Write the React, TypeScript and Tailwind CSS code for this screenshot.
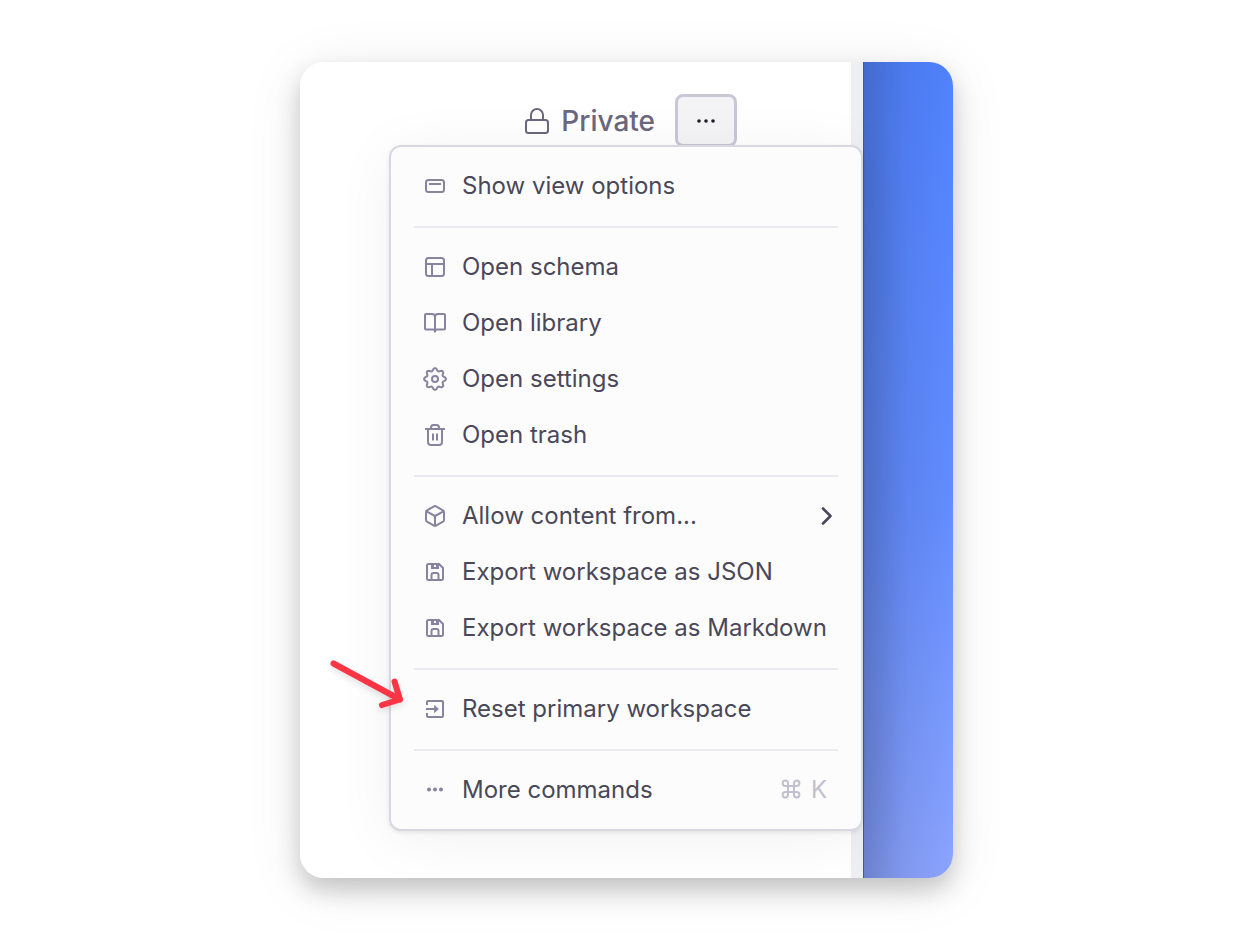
import React from 'react';

// Wavy ring with eight teeth, drawn round the centre of a 24px box
const gearPoints = Array.from({ length: 96 }, (_, i) => {
  const a = (i / 96) * Math.PI * 2;
  const wave = Math.cos(8 * a);
  const r = 9.6 + 1.3 * Math.sign(wave) * Math.pow(Math.abs(wave), 0.8);
  return `${(12 + r * Math.sin(a)).toFixed(2)},${(12 - r * Math.cos(a)).toFixed(2)}`;
}).join(' ');

const icons = {
  view: (
    <>
      <rect x="3" y="6" width="18" height="12" rx="2.5" />
      <path d="M6 10h12" />
    </>
  ),
  schema: (
    <>
      <rect x="3" y="3" width="18" height="18" rx="2.5" />
      <path d="M3 9h18M9 9v12" />
    </>
  ),
  library: <path d="M12 21.5V6a3 3 0 0 0-3-3H3a1 1 0 0 0-1 1v13.5a1 1 0 0 0 1 1h7a2 2 0 0 1 2 2 2 2 0 0 1 2-2h7a1 1 0 0 0 1-1V4a1 1 0 0 0-1-1h-6a3 3 0 0 0-3 3" />,
  settings: (
    <>
      <polygon points={gearPoints} />
      <circle cx="12" cy="12" r="3" />
    </>
  ),
  trash: (
    <>
      <path d="M2 6h20M8 6V4.5A2.5 2.5 0 0 1 10.5 2h3A2.5 2.5 0 0 1 16 4.5V6" />
      <path d="M5 6v13a3 3 0 0 0 3 3h8a3 3 0 0 0 3-3V6" />
      <path d="M10 10.5v7M14 10.500v7" />
    </>
  ),
  box: (
    <>
      <path d="M11 2.400a2 2 0 0 1 2 0l7 4a2 2 0 0 1 1 1.700v7.800a2 2 0 0 1-1 1.700l-7 4a2 2 0 0 1-2 0l-7-4a2 2 0 0 1-1-1.700V8.100a2 2 0 0 1 1-1.700z" />
      <path d="M3.500 7.300 12 12l8.500-4.700M12 12v10" />
    </>
  ),
  save: (
    <>
      <path d="M5.500 4H16l4 4v10.500a1.500 1.500 0 0 1-1.500 1.500h-13A1.500 1.500 0 0 1 4 18.500v-13A1.500 1.500 0 0 1 5.500 4z" />
      <path d="M8.500 20v-5a2 2 0 0 1 2-2h3a2 2 0 0 1 2 2v5" />
      <path d="M8 4h8v5H8zM11 5v2h2V5z" fill="currentColor" fillRule="evenodd" stroke="none" />
    </>
  ),
  reset: (
    <>
      <path d="M4 8V5a1 1 0 0 1 1-1h14a1 1 0 0 1 1 1v14a1 1 0 0 1-1 1H5a1 1 0 0 1-1-1v-3" />
      <path d="M3 12h9" />
      <path d="M11.500 8.500v7L15.500 12z" fill="currentColor" strokeWidth="0.8" />
    </>
  ),
  more: (
    <g fill="currentColor" stroke="none">
      <circle cx="6" cy="11.5" r="2" />
      <circle cx="12" cy="11.5" r="2" />
      <circle cx="18" cy="11.5" r="2" />
    </g>
  ),
};

type IconName = keyof typeof icons;

interface MenuEntry {
  icon: IconName;
  label: string;
  submenu?: boolean;
  shortcut?: boolean;
  highlighted?: boolean;
}

const groups: MenuEntry[][] = [
  [{ icon: 'view', label: 'Show view options' }],
  [
    { icon: 'schema', label: 'Open schema' },
    { icon: 'library', label: 'Open library' },
    { icon: 'settings', label: 'Open settings' },
    { icon: 'trash', label: 'Open trash' },
  ],
  [
    { icon: 'box', label: 'Allow content from...', submenu: true },
    { icon: 'save', label: 'Export workspace as JSON' },
    { icon: 'save', label: 'Export workspace as Markdown' },
  ],
  [{ icon: 'reset', label: 'Reset primary workspace', highlighted: true }],
  [{ icon: 'more', label: 'More commands', shortcut: true }],
];

function MenuIcon({ name }: { name: IconName }) {
  return (
    <svg
      className="h-6 w-6 shrink-0 text-[#8884a0]"
      viewBox="0 0 24 24"
      fill="none"
      stroke="currentColor"
      strokeWidth="2"
      strokeLinejoin="round"
      aria-hidden="true"
    >
      {icons[name]}
    </svg>
  );
}

function PointerArrow() {
  return (
    <svg
      className="pointer-events-none absolute -left-[86px] -top-[25px] h-14 w-20 drop-shadow-md"
      viewBox="0 0 80 56"
      fill="none"
      stroke="#fb3543"
      strokeWidth="6"
      strokeLinecap="round"
      strokeLinejoin="round"
      aria-hidden="true"
    >
      <path d="M5.500 7.500 72 43.500M66.500 25.500 72 43.500 54 49" />
    </svg>
  );
}

function MenuItem({ entry }: { entry: MenuEntry }) {
  return (
    <li className="relative">
      <button type="button" role="menuitem" className="flex h-14 w-full items-center gap-[15px] whitespace-nowrap pl-[9px] pr-[5px] text-left">
        <MenuIcon name={entry.icon} />
        <span className="flex-1">{entry.label}</span>
        {entry.submenu && (
          <svg className="h-6 w-3 shrink-0" viewBox="0 0 12 24" fill="none" stroke="currentColor" strokeWidth="2.6" strokeLinecap="round" strokeLinejoin="round" aria-hidden="true">
            <path d="m2 4.500 7.500 7.500L2 19.500" />
          </svg>
        )}
        {entry.shortcut && (
          <span className="flex items-center gap-2 pr-1.5 text-[#c2c0ce]">
            <svg className="h-6 w-6" viewBox="0 1 24 24" fill="none" stroke="currentColor" strokeWidth="2" aria-hidden="true">
              <path d="M9 9v6h6V9zM9 9H6.300A2.700 2.700 0 1 1 9 6.300zM15 9V6.300A2.700 2.700 0 1 1 17.700 9zM15 15h2.700A2.700 2.700 0 1 1 15 17.700zM9 15v2.700A2.700 2.700 0 1 1 6.300 15z" />
            </svg>
            K
          </span>
        )}
      </button>
      {entry.highlighted && <PointerArrow />}
    </li>
  );
}

export default function App() {
  return (
    <main className="flex min-h-screen items-center justify-center bg-white font-['Inter',sans-serif]">
      <div className="flex w-full max-w-[653px] overflow-hidden rounded-3xl bg-white shadow-[0_12px_24px_rgba(0,0,0,0.2),0_8px_60px_rgba(0,0,0,0.08)]">
        <section className="relative flex flex-1 flex-col items-end bg-white pb-[47px] pt-8">
          <div className="absolute inset-y-0 right-0 w-3 bg-[#efeff2]" />

          <header className="flex items-center gap-5 pr-[126px]">
            <div className="flex items-center gap-3 text-[28px] font-medium leading-8 text-[#6b677f]">
              <svg className="h-[26px] w-6" viewBox="0 0 24 26" fill="none" stroke="currentColor" strokeWidth="2" strokeLinejoin="round" aria-hidden="true">
                <rect x="1" y="12" width="22" height="13" rx="2.5" />
                <path d="M6 12V7a6 6 0 0 1 12 0v5" />
              </svg>
              Private
            </div>
            <button
              type="button"
              aria-label="More actions"
              aria-haspopup="menu"
              className="flex h-[53px] w-[62px] items-center justify-center rounded-lg border-3 border-[#c9c7d6] bg-[#f4f4f6] text-[#1f1e26]"
            >
              <svg className="h-6 w-6" viewBox="0 0 24 24" fill="currentColor" aria-hidden="true">
                <circle cx="5" cy="12" r="1.8" />
                <circle cx="12" cy="12" r="1.8" />
                <circle cx="19" cy="12" r="1.8" />
              </svg>
            </button>
          </header>

          <div
            role="menu"
            className="relative -mt-0.5 w-[474px] rounded-xl border-2 border-[#d9d8e2] bg-[#fcfcfd] px-[23px] py-[11px] text-2xl text-[#4a4858] shadow-[0_2px_4px_rgba(0,0,0,0.08),0_8px_60px_rgba(0,0,0,0.06)]"
          >
            {groups.map((group, i) => (
              <React.Fragment key={i}>
                {i > 0 && <hr className="mb-[11px] mt-3 border-t-2 border-[#ebeaf0]" />}
                <ul>
                  {group.map((entry) => (
                    <MenuItem key={entry.label} entry={entry} />
                  ))}
                </ul>
              </React.Fragment>
            ))}
          </div>
        </section>

        <aside className="w-[90px] border-l border-[#3c58a6] bg-[linear-gradient(90deg,rgba(40,50,90,0.3),rgba(40,50,90,0.1)_45%,transparent),linear-gradient(172deg,#4f82ff,#638dff_55%,#8ca5ff)]" />
      </div>
    </main>
  );
}
